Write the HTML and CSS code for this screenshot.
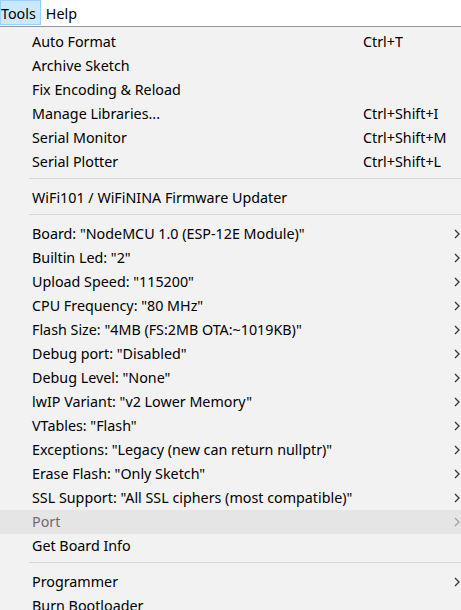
FILE: index.html
```html
<!DOCTYPE html>
<html>
<head>
<meta charset="utf-8">
<link rel="stylesheet" href="styles.css">
</head>
<body>
<div class="menubar">
  <span class="mb-item active">Tools</span>
  <span class="mb-item">Help</span>
</div>
<div class="menu">
  <div class="row"><span class="label">Auto Format</span><span class="key">Ctrl+T</span><span class="arrow"></span></div>
  <div class="row"><span class="label">Archive Sketch</span><span class="key"></span><span class="arrow"></span></div>
  <div class="row"><span class="label">Fix Encoding &amp; Reload</span><span class="key"></span><span class="arrow"></span></div>
  <div class="row"><span class="label">Manage Libraries...</span><span class="key">Ctrl+Shift+I</span><span class="arrow"></span></div>
  <div class="row"><span class="label">Serial Monitor</span><span class="key">Ctrl+Shift+M</span><span class="arrow"></span></div>
  <div class="row"><span class="label">Serial Plotter</span><span class="key">Ctrl+Shift+L</span><span class="arrow"></span></div>
  <div class="sep"></div>
  <div class="row"><span class="label">WiFi101 / WiFiNINA Firmware Updater</span><span class="key"></span><span class="arrow"></span></div>
  <div class="sep"></div>
  <div class="row"><span class="label">Board: "NodeMCU 1.0 (ESP-12E Module)"</span><span class="key"></span><span class="arrow"><svg viewBox="0 0 6 10" width="6" height="10"><path d="M1 1 L5 5 L1 9" /></svg></span></div>
  <div class="row"><span class="label">Builtin Led: "2"</span><span class="key"></span><span class="arrow"><svg viewBox="0 0 6 10" width="6" height="10"><path d="M1 1 L5 5 L1 9" /></svg></span></div>
  <div class="row"><span class="label">Upload Speed: "115200"</span><span class="key"></span><span class="arrow"><svg viewBox="0 0 6 10" width="6" height="10"><path d="M1 1 L5 5 L1 9" /></svg></span></div>
  <div class="row"><span class="label">CPU Frequency: "80 MHz"</span><span class="key"></span><span class="arrow"><svg viewBox="0 0 6 10" width="6" height="10"><path d="M1 1 L5 5 L1 9" /></svg></span></div>
  <div class="row"><span class="label">Flash Size: "4MB (FS:2MB OTA:~1019KB)"</span><span class="key"></span><span class="arrow"><svg viewBox="0 0 6 10" width="6" height="10"><path d="M1 1 L5 5 L1 9" /></svg></span></div>
  <div class="row"><span class="label">Debug port: "Disabled"</span><span class="key"></span><span class="arrow"><svg viewBox="0 0 6 10" width="6" height="10"><path d="M1 1 L5 5 L1 9" /></svg></span></div>
  <div class="row"><span class="label">Debug Level: "None"</span><span class="key"></span><span class="arrow"><svg viewBox="0 0 6 10" width="6" height="10"><path d="M1 1 L5 5 L1 9" /></svg></span></div>
  <div class="row"><span class="label">lwIP Variant: "v2 Lower Memory"</span><span class="key"></span><span class="arrow"><svg viewBox="0 0 6 10" width="6" height="10"><path d="M1 1 L5 5 L1 9" /></svg></span></div>
  <div class="row"><span class="label">VTables: "Flash"</span><span class="key"></span><span class="arrow"><svg viewBox="0 0 6 10" width="6" height="10"><path d="M1 1 L5 5 L1 9" /></svg></span></div>
  <div class="row"><span class="label">Exceptions: "Legacy (new can return nullptr)"</span><span class="key"></span><span class="arrow"><svg viewBox="0 0 6 10" width="6" height="10"><path d="M1 1 L5 5 L1 9" /></svg></span></div>
  <div class="row"><span class="label">Erase Flash: "Only Sketch"</span><span class="key"></span><span class="arrow"><svg viewBox="0 0 6 10" width="6" height="10"><path d="M1 1 L5 5 L1 9" /></svg></span></div>
  <div class="row"><span class="label">SSL Support: "All SSL ciphers (most compatible)"</span><span class="key"></span><span class="arrow"><svg viewBox="0 0 6 10" width="6" height="10"><path d="M1 1 L5 5 L1 9" /></svg></span></div>
  <div class="row disabled hover"><span class="label">Port</span><span class="key"></span><span class="arrow"><svg viewBox="0 0 6 10" width="6" height="10"><path d="M1 1 L5 5 L1 9" /></svg></span></div>
  <div class="row"><span class="label">Get Board Info</span><span class="key"></span><span class="arrow"></span></div>
  <div class="sep"></div>
  <div class="row"><span class="label">Programmer</span><span class="key"></span><span class="arrow"><svg viewBox="0 0 6 10" width="6" height="10"><path d="M1 1 L5 5 L1 9" /></svg></span></div>
  <div class="row"><span class="label">Burn Bootloader</span><span class="key"></span><span class="arrow"></span></div>
</div>
</body>
</html>
```
FILE: styles.css
```css
html, body {
  margin: 0;
  padding: 0;
  background: #f2f2f2;
  overflow: hidden;
  font-family: "Noto Sans", "Open Sans", sans-serif;
  font-size: 14.3px;
  color: #000;
}
.menubar {
  height: 26px;
  background: #fff;
  display: flex;
  align-items: stretch;
}
.mb-item {
  display: flex;
  align-items: center;
  padding: 1px 6px 0 4px;
  border: 1px solid transparent;
  box-sizing: border-box;
  height: 25px;
}
.mb-item.active {
  background: #cce8ff;
  border-color: #99d1ff;
  padding-left: 0;
  padding-right: 4px;
}
.menu {
  border-top: 1px solid #979797;
  padding-top: 3px;
  background: #f2f2f2;
}
.row {
  height: 24px;
  box-sizing: border-box;
  padding-bottom: 2px;
  display: grid;
  grid-template-columns: 331px 1fr 7px;
  align-items: center;
  padding-left: 32px;
  white-space: nowrap;
}
.row.hover {
  background: #e5e5e5;
}
.row.disabled {
  color: #6d6d6d;
}
.arrow {
  display: flex;
  align-items: center;
  padding-top: 2px;
}
.arrow svg {
  fill: none;
  stroke: #333;
  stroke-width: 1.3;
}
.disabled .arrow svg {
  stroke: #a0a0a0;
}
.sep {
  height: 1px;
  background: #d7d7d7;
  margin: 4px 0 7px 29px;
}
```
